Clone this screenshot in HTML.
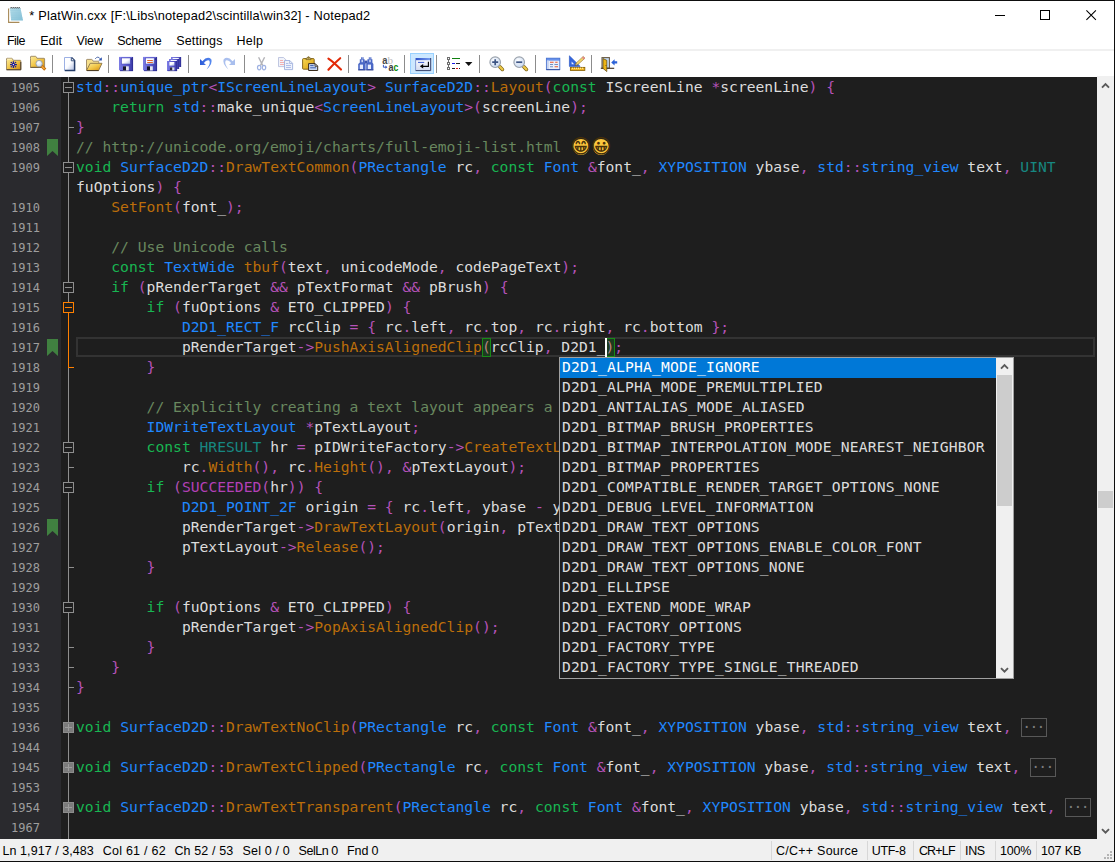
<!DOCTYPE html>
<html lang="en">
<head>
<meta charset="utf-8">
<title>* PlatWin.cxx [F:\Libs\notepad2\scintilla\win32] - Notepad2</title>
<style>
html,body{margin:0;padding:0;}
body{width:1115px;height:862px;overflow:hidden;background:#fff;position:relative;font-family:"Liberation Sans",sans-serif;}
#win{position:absolute;left:0;top:0;width:1115px;height:862px;overflow:hidden;background:#fff;}
.abs{position:absolute;}
/* title bar */
#bt{position:absolute;left:0;top:0;width:1115px;height:1px;background:#0e0e0e;}
#br{position:absolute;left:1114px;top:0;width:1px;height:862px;background:#0e0e0e;}
#bb{position:absolute;left:0;top:861px;width:1115px;height:1px;background:#0e0e0e;}
#title{position:absolute;left:29.3px;top:7px;height:18px;line-height:18px;font-size:12.8px;color:#000;white-space:pre;letter-spacing:0.175px;}
/* menu */
.mi{position:absolute;top:31px;height:19px;line-height:21px;font-size:12.5px;color:#000;white-space:pre;}
#menuline{position:absolute;left:0;top:49px;width:1114px;height:2px;background:#f0f0f0;}
/* toolbar */
.sep{position:absolute;top:55px;width:1px;height:18px;background:#8d8d8d;}
.ico{position:absolute;overflow:visible;}
/* editor */
#ed{position:absolute;left:0;top:77px;width:1097px;height:762px;background:#1e1e1e;overflow:hidden;}
#edtop{position:absolute;left:0;top:77px;width:1097px;height:1px;background:#111111;z-index:5;}
#lnm{position:absolute;left:0;top:0;width:61px;height:762px;background:#2a2a2e;}
.ln{position:absolute;left:0;width:40px;height:20px;line-height:22px;text-align:right;font-family:"DejaVu Sans Mono","Liberation Mono",monospace;font-size:12px;color:#9e9e9e;white-space:pre;}
.cl{position:absolute;left:76px;height:20px;line-height:20px;font-family:"DejaVu Sans Mono","Liberation Mono",monospace;font-size:14.667px;color:#dcdcdc;white-space:pre;}
.k{color:#18b652;}
.t{color:#2088ff;}
.f{color:#bc6e0a;}
.o{color:#b552b8;}
.c{color:#69885f;}
.bm{color:#b98484;}
.m{color:#b340b6;}
.z{color:#178781;}

.fb{width:24px;height:17px;border:1px solid #585858;line-height:15px;text-align:center;font-family:"DejaVu Sans Mono","Liberation Mono",monospace;font-size:14.667px;letter-spacing:-1.7px;text-indent:-1.7px;color:#7c7c7c;white-space:pre;}
.emo{width:16px;height:16px;border-radius:50%;background:#ffc83d;}
.emo span{position:absolute;left:-4px;top:-4.2px;width:24px;text-align:center;font-family:"DejaVu Sans",sans-serif;font-variant-emoji:text;font-size:20px;line-height:24px;color:#46300a;}
#pop{position:absolute;left:559px;top:280px;width:453px;height:320px;border:1px solid #a0a0a0;background:#1e1e1e;overflow:hidden;}
.pi{position:absolute;left:0;width:436px;height:20px;line-height:17.4px;letter-spacing:0.17px;padding-left:2px;box-sizing:border-box;font-family:"DejaVu Sans Mono","Liberation Mono",monospace;font-size:14.667px;color:#dcdcdc;white-space:pre;}
.pi.sel{background:#0078d7;color:#ffffff;}
/* status */
#sb{position:absolute;left:0;top:839px;width:1114px;height:22px;background:#f0f0f0;}
.st{position:absolute;top:0;height:22px;line-height:25.6px;font-size:12.5px;color:#000;white-space:pre;}
.ss{position:absolute;top:2px;width:1px;height:19px;background:#d7d7d7;}
</style>
</head>
<body>
<div id="win">
<svg class="abs" style="left:7px;top:6px" width="18" height="18" viewBox="0 0 18 18">
<defs><linearGradient id="gN" x1="0" y1="0" x2="1" y2="1"><stop offset="0" stop-color="#c2e4ee"/><stop offset="1" stop-color="#7fbdd6"/></linearGradient></defs>
<path d="M1.6 2.4V16.4H12.4" fill="none" stroke="#a88a58" stroke-width="1.1"/>
<path d="M2.9 1.9H13.4L16 14.6H4.1Z" fill="url(#gN)"/>
<path d="M3.3 4.2H13.9M3.5 6.1H14.3M3.7 8H14.7M3.8 9.9H15M4 11.8H15.4M4.1 13.6H15.8" stroke="#8ec6da" stroke-width="0.7"/>
<path d="M3.4 2.4L4.2 1.1L5 2.4M5.4 2.4L6.2 1.1L7 2.4M7.4 2.4L8.2 1.1L9 2.4M9.4 2.4L10.2 1.1L11 2.4M11.4 2.4L12.2 1.1L13 2.4" fill="none" stroke="#2c3438" stroke-width="0.7"/>
</svg>
<div id="title">* PlatWin.cxx [F:\Libs\notepad2\scintilla\win32] - Notepad2</div>
<svg class="abs" style="left:976px;top:0" width="138" height="31" viewBox="0 0 138 31" shape-rendering="crispEdges">
<rect x="19" y="15" width="10" height="1" fill="#000"/>
<rect x="64.5" y="10.5" width="9" height="9" fill="none" stroke="#000" stroke-width="1"/>
<path d="M110.4 10.4L119.9 19.9M119.9 10.4L110.4 19.9" stroke="#000" stroke-width="1.05" shape-rendering="geometricPrecision"/>
</svg>

<div class="mi" style="left:7.0px;letter-spacing:-0.60px">File</div>
<div class="mi" style="left:40.2px;letter-spacing:0.10px">Edit</div>
<div class="mi" style="left:76.4px;letter-spacing:-0.10px">View</div>
<div class="mi" style="left:117.2px;letter-spacing:-0.26px">Scheme</div>
<div class="mi" style="left:176.2px;letter-spacing:0.15px">Settings</div>
<div class="mi" style="left:236.4px;letter-spacing:0.30px">Help</div>
<div id="menuline"></div>

<div class="abs" style="left:410px;top:53px;width:22px;height:19px;border:1px solid #99d1ff;background:#cce8ff"></div>
<svg class="abs" style="left:0;top:50px" width="1114" height="27" viewBox="0 50 1114 27">
<defs>
<linearGradient id="gF" x1="0" y1="0" x2="1" y2="1"><stop offset="0" stop-color="#fcec9e"/><stop offset="0.5" stop-color="#f2c84a"/><stop offset="1" stop-color="#d48c0c"/></linearGradient>
<linearGradient id="gD" x1="0" y1="0" x2="1" y2="0"><stop offset="0" stop-color="#7c7ce4"/><stop offset="0.5" stop-color="#5c5cd0"/><stop offset="1" stop-color="#3a3aa6"/></linearGradient>
<linearGradient id="gP" x1="0" y1="0" x2="1" y2="1"><stop offset="0" stop-color="#ffffff"/><stop offset="0.5" stop-color="#fbfcff"/><stop offset="1" stop-color="#a9b8de"/></linearGradient>
<radialGradient id="gL" cx="0.4" cy="0.35" r="0.7"><stop offset="0" stop-color="#ffffff"/><stop offset="1" stop-color="#c4d6f0"/></radialGradient>
<linearGradient id="gW" x1="0" y1="0" x2="0" y2="1"><stop offset="0" stop-color="#ffffff"/><stop offset="1" stop-color="#d4dcf0"/></linearGradient>
<linearGradient id="gT" x1="0" y1="0" x2="1" y2="0"><stop offset="0" stop-color="#2c50c8"/><stop offset="1" stop-color="#7aa0f0"/></linearGradient>
<linearGradient id="gC" x1="0" y1="0" x2="1" y2="1"><stop offset="0" stop-color="#f8d850"/><stop offset="1" stop-color="#d89c10"/></linearGradient>
<linearGradient id="gU" x1="0" y1="0" x2="1" y2="0"><stop offset="0" stop-color="#2a5ad8"/><stop offset="1" stop-color="#5a8cf0"/></linearGradient>
</defs>
<!-- separators -->
<g fill="#8c8c8c"><rect x="52" y="55" width="1" height="18"/><rect x="108" y="55" width="1" height="18"/><rect x="188" y="55" width="1" height="18"/><rect x="244" y="55" width="1" height="18"/><rect x="348" y="55" width="1" height="18"/><rect x="404" y="55" width="1" height="18"/><rect x="436" y="55" width="1" height="18"/><rect x="479" y="55" width="1" height="18"/><rect x="535" y="55" width="1" height="18"/><rect x="591" y="55" width="1" height="18"/></g>
<!-- 1 favorites folder -->
<g>
<path d="M6.5 60.5V58.9Q6.5 58.3 7.1 58.3H11.6Q12.2 58.3 12.5 58.9L13.2 60.3H20.2Q20.8 60.3 20.8 60.9V69.6H6.5Z" fill="url(#gF)" stroke="#9a8460" stroke-width="0.9"/>
<path d="M6.5 69.8H20.9M20.8 62V69.8" stroke="#4a3820" stroke-width="1" fill="none"/>
<path d="M7.2 59.2H11.8" stroke="#fdf4c8" stroke-width="1"/>
<g stroke="#18189a" stroke-width="1.3" fill="none"><path d="M13.4 61.2V68M10 64.6H16.9"/></g>
<g fill="#1c1c9c"><circle cx="11.3" cy="62.5" r="0.8"/><circle cx="15.5" cy="62.5" r="0.8"/><circle cx="11.3" cy="66.7" r="0.8"/><circle cx="15.5" cy="66.7" r="0.8"/><circle cx="13.4" cy="64.6" r="1.8"/></g>
<circle cx="13.4" cy="64.6" r="0.7" fill="#fff"/>
</g>
<!-- 2 find folder -->
<g>
<path d="M30.5 58.5V56.9Q30.5 56.3 31.1 56.3H35.4Q36 56.3 36.3 56.9L37 58.3H44Q44.6 58.3 44.6 58.9V67.4H30.5Z" fill="url(#gF)" stroke="#9a8460" stroke-width="0.9"/>
<path d="M30.5 67.4H44.6" stroke="#6a5838" stroke-width="0.9"/>
<path d="M42.4 66.8L44.2 68.6" stroke="#c47012" stroke-width="3" stroke-linecap="square"/>
<path d="M42.6 67L44 68.4" stroke="#f4a838" stroke-width="1.4" stroke-linecap="square"/>
<circle cx="39.1" cy="63.6" r="3.2" fill="url(#gL)" stroke="#98a0a8" stroke-width="0.9"/>
</g>
<!-- 3 new -->
<g>
<path d="M64.5 57.5H71.5L74.6 60.6V70.5H64.5Z" fill="url(#gP)"/>
<path d="M64.5 70.5V57.5H71.5" fill="none" stroke="#9cb0e4" stroke-width="1"/>
<path d="M71.5 57.5L74.6 60.6V70.5H64.8" fill="none" stroke="#243c68" stroke-width="1.5"/>
<path d="M71.3 57.7V60.8H74.4" fill="#e8eefc" stroke="#2c4672" stroke-width="0.9"/>
</g>
<!-- 4 open -->
<g>
<path d="M86.5 70.3V60Q86.5 59.4 87.1 59.4H91.6Q92.2 59.4 92.5 60L93.1 61.2H98.2Q98.8 61.2 98.8 61.8V63.3" fill="#f7e08c" stroke="#9a8460" stroke-width="0.9"/>
<path d="M86.5 70.5L90.2 63.3H102L98.6 70.5Z" fill="url(#gF)" stroke="#8a7448" stroke-width="0.9"/>
<path d="M87 70.6H98.6" stroke="#4a3a20" stroke-width="1"/>
<path d="M95.2 58.9Q97.8 55.2 100.6 59.2" fill="none" stroke="#4a66a8" stroke-width="0.95"/>
<path d="M98.4 60.4H101.8V57.2Z" fill="#2c52b0"/>
</g>
<!-- 5 save -->
<g id="flop">
<path d="M119 57H133V71H120.2L119 69.8Z" fill="url(#gD)"/>
<path d="M119.3 57.3H132.7" stroke="#8c8cf0" stroke-width="0.6"/>
<path d="M132.6 57V71M120 70.7H133" stroke="#2c2c90" stroke-width="0.8"/>
<rect x="121.7" y="58" width="8.5" height="6" fill="url(#gP)" stroke="#4848b8" stroke-width="0.5"/>
<rect x="123" y="66.3" width="5.8" height="4.2" fill="#e4e6ee"/>
<rect x="123" y="66.3" width="3" height="4.2" fill="#14142c"/>
<rect x="131.2" y="58.4" width="0.9" height="1.6" fill="#2c2c80"/>
</g>
<!-- 6 save as -->
<use href="#flop" x="24"/>
<path d="M147.2 60.5H152.8M147.2 62.5H152.8" stroke="#e0642c" stroke-width="1"/>
<!-- 7 save copies -->
<g id="sflop">
<rect x="171" y="57" width="10" height="10" fill="url(#gD)"/>
<path d="M180.7 57V67" stroke="#2c2c90" stroke-width="0.7"/>
<rect x="172.6" y="57.9" width="6.2" height="1.6" fill="#f4f6ff"/>
</g>
<use href="#sflop" x="-2" y="2"/>
<g>
<rect x="167" y="61" width="10" height="10" fill="url(#gD)"/>
<path d="M176.7 61V71M167.6 70.7H177" stroke="#2c2c90" stroke-width="0.7"/>
<rect x="169.4" y="62" width="5" height="3.6" fill="url(#gP)"/>
<rect x="170" y="67.4" width="4.4" height="3" fill="#dcdfe8"/>
<rect x="170" y="67.4" width="2.2" height="3" fill="#2a2a3c"/>
</g>
<!-- 8 undo -->
<path d="M200 58.9V64.9H206L203.9 62.9Q206.2 59.6 209.2 60.4Q211.2 62.6 206.6 69.6Q213.2 63.2 211.3 59.3Q207.4 55.6 202.4 61.2Z" fill="url(#gU)"/>
<!-- 9 redo -->
<path d="M235 58.9V64.9H229L231.1 62.9Q228.8 59.6 225.8 60.4Q223.8 62.6 228.4 69.6Q221.8 63.2 223.7 59.3Q227.6 55.6 232.6 61.2Z" fill="#a9bfee"/>
<!-- 10 cut -->
<g fill="none">
<path d="M258.6 57.2L262.8 65.6M264.6 57.2L260.4 65.6" stroke="#b4b4b8" stroke-width="1.4"/>
<ellipse cx="259.2" cy="67.6" rx="1.7" ry="2.2" stroke="#9fb2e2" stroke-width="1.2"/>
<ellipse cx="264" cy="67.6" rx="1.7" ry="2.2" stroke="#9fb2e2" stroke-width="1.2"/>
</g>
<!-- 11 copy -->
<g>
<path d="M278.5 57.5H283.6L286.2 60.1V66.6H278.5Z" fill="#f1f3fa" stroke="#b9c1de" stroke-width="0.9"/>
<path d="M280 60.5H283M280 62.5H284.6M280 64.5H284.6" stroke="#f3a8a8" stroke-width="0.9"/>
<path d="M284.5 60.5H289.8L292.6 63.3V69.6H284.5Z" fill="#eef2fb" stroke="#9fb0dc" stroke-width="0.9"/>
<path d="M289.6 60.7V63.5H292.4" fill="none" stroke="#9fb0dc" stroke-width="0.8"/>
<path d="M286 63.5H288.4M286 65.5H291M286 67.5H291" stroke="#a8b8e8" stroke-width="0.9"/>
</g>
<!-- 12 paste -->
<g>
<rect x="302.6" y="58.6" width="11.6" height="10.6" rx="0.8" fill="url(#gC)" stroke="#7a5a10" stroke-width="0.9"/>
<path d="M306 59.6V58.2H307.4Q307.4 56.6 308.5 56.6Q309.6 56.6 309.6 58.2H311V59.6Z" fill="#f0d878" stroke="#6a5420" stroke-width="0.7"/>
<circle cx="308.5" cy="57.9" r="0.6" fill="#5a4a20"/>
<path d="M308.6 63.6H315.2L317.7 66.1V70.5H308.6Z" fill="#c6d6f2" stroke="#3a2c1c" stroke-width="1"/>
<path d="M315 63.8V66.3H317.5" fill="none" stroke="#3a2c1c" stroke-width="0.8"/>
<path d="M310.2 65.6H313.6M310.2 67.8H316" stroke="#3c5cac" stroke-width="1"/>
</g>
<!-- 13 delete -->
<g stroke="#e22a08" stroke-width="2.1" stroke-linecap="round" fill="none">
<path d="M328.4 58.6Q334 62.4 341 69.6"/>
<path d="M340.2 58.2Q333.6 63.8 328.4 69.8"/>
</g>
<!-- 14 find -->
<g>
<path d="M361 57.2H363.6V59.2H364.6V62.6L365.6 64V70H358.2V64L359.8 62.6V59.2H361Z" fill="#4a68c6"/>
<path d="M368.8 57.2H371.4V59.2H372.4V62.6L373.4 64V70H366.2V64L367.4 62.6V59.2H368.8Z" fill="#4a68c6"/>
<rect x="364.4" y="60.6" width="3" height="3" fill="#3a54b0"/>
<rect x="359.8" y="64.6" width="3.2" height="4.4" fill="#e6ecfc"/>
<rect x="367.8" y="64.6" width="3.2" height="4.4" fill="#e6ecfc"/>
<rect x="361.4" y="59.6" width="1.6" height="2.6" fill="#c4d0f2"/>
<rect x="369.2" y="59.6" width="1.6" height="2.6" fill="#c4d0f2"/>
<path d="M361.6 58H363M369.4 58H370.8" stroke="#dfe6fa" stroke-width="0.8"/>
<path d="M358.2 70H365.6M366.2 70H373.4" stroke="#283a88" stroke-width="0.9"/>
</g>
<!-- 15 replace -->
<g font-family="Liberation Sans, sans-serif" font-weight="bold" font-size="10.2">
<text x="382.2" y="63.7" fill="#484848" textLength="5.2" lengthAdjust="spacingAndGlyphs">a</text>
<text x="387.4" y="63.7" fill="#bcbcbc" font-family="Liberation Serif, serif" font-weight="normal" font-size="11">b</text>
<text x="388.4" y="70.8" fill="#3a3a3a" textLength="5" lengthAdjust="spacingAndGlyphs">a</text>
<text x="393.4" y="70.8" fill="#0a8a0a" textLength="4.8" lengthAdjust="spacingAndGlyphs">c</text>
</g>
<path d="M383.4 64.8V67.2H386.4" fill="none" stroke="#3a5ac0" stroke-width="1"/>
<path d="M385.4 65.6L387.4 67.2L385.4 68.8Z" fill="#3a5ac0"/>
<!-- 16 wrap -->
<g>
<rect x="415.5" y="58.2" width="15.2" height="12" fill="url(#gW)"/>
<rect x="415.5" y="58" width="15.4" height="2.2" fill="url(#gT)"/>
<path d="M415.6 60V70.3" stroke="#7088c8" stroke-width="0.8"/>
<path d="M430.7 58V70.6H415.6" fill="none" stroke="#36406c" stroke-width="1"/>
<path d="M418 62.4H424.2" stroke="#3c5cd0" stroke-width="1"/>
<path d="M428.4 61.8V66.3H422" fill="none" stroke="#000" stroke-width="1.15"/>
<path d="M419.8 66.3L423.2 64V68.6Z" fill="#000"/>
</g>
<!-- 17 fold tree -->
<g shape-rendering="crispEdges">
<path d="M448.5 60V62M448.5 65V67" stroke="#707070" stroke-width="1"/>
<g fill="#fff" stroke="#6e6e6e" stroke-width="1"><rect x="447.5" y="57.5" width="2" height="2"/><rect x="447.5" y="62.5" width="2" height="2"/><rect x="447.5" y="67.5" width="2" height="2"/></g>
<rect x="452" y="58" width="8" height="1" fill="#108010"/>
<rect x="452" y="63" width="3" height="1" fill="#1818e8"/><rect x="456" y="63" width="4" height="1" fill="#202020"/>
<rect x="452" y="68" width="3" height="1" fill="#202020"/><rect x="456" y="68" width="2" height="1" fill="#e81818"/><rect x="459" y="68" width="1" height="1" fill="#202020"/>
</g>
<path d="M465 62H472.4L468.7 66Z" fill="#111"/>
<!-- 18 zoom in -->
<g id="zm">
<path d="M499.8 66.8L502.4 69.4" stroke="#7a6018" stroke-width="3.6" stroke-linecap="round"/>
<path d="M499.8 66.8L502.4 69.4" stroke="#ecc848" stroke-width="2.2" stroke-linecap="round"/>
<circle cx="495.2" cy="62.2" r="5.3" fill="url(#gL)" stroke="#9aa2ac" stroke-width="1.1"/>
</g>
<path d="M492.2 62.2H498.2M495.2 59.2V65.2" stroke="#3c5484" stroke-width="1.7"/>
<!-- 19 zoom out -->
<use href="#zm" x="24"/>
<path d="M516.2 62.2H522.2" stroke="#3c5484" stroke-width="1.7"/>
<!-- 20 scheme -->
<g>
<rect x="546.4" y="58.2" width="13.4" height="11.4" fill="#eaf0fc"/>
<rect x="546.4" y="58" width="13.4" height="2.6" fill="#5c88e8"/>
<path d="M546.4 58.8H559.8" stroke="#8cb0f8" stroke-width="0.8"/>
<rect x="547" y="60.6" width="1.8" height="9" fill="#c8d4f0"/>
<rect x="546.4" y="58.2" width="13.4" height="11.4" fill="none" stroke="#4a74d0" stroke-width="0.9"/>
<path d="M546.4 69.7H559.9" stroke="#2c4a98" stroke-width="0.9"/>
<path d="M550 62.3H553.6M555.2 62.3H557.6M554.6 66.7H558" stroke="#f0582c" stroke-width="1.1"/>
<path d="M550 64.5H553M554.4 64.5H558M550 66.7H553" stroke="#7890c0" stroke-width="1.1"/>
</g>
<!-- 21 customize -->
<g>
<path d="M569.4 55.8V66.4H580.2Z" fill="#3466dc" stroke="#2450c0" stroke-width="0.6"/>
<path d="M571.6 61.6V64.2H574.2Z" fill="#e8f0ff"/>
<path d="M583.2 56.4L585 58.2L577.4 65L575.2 65.6L575.8 63.4Z" fill="#f2d468" stroke="#8a7030" stroke-width="0.6"/>
<path d="M583.2 56.4L585 58.2L583.6 59.4L581.8 57.6Z" fill="#e88888"/>
<path d="M575.2 65.6L575.8 63.4L577.4 65Z" fill="#fff" stroke="#333" stroke-width="0.5"/>
<rect x="570.4" y="67.4" width="14.4" height="3" fill="#f4b824" stroke="#8c6408" stroke-width="0.9"/>
<path d="M572.5 67.6V69M574.5 67.6V69M576.5 67.6V69M578.5 67.6V69M580.5 67.6V69M582.5 67.6V69" stroke="#fff0b0" stroke-width="0.8"/>
</g>
<!-- 22 exit -->
<g>
<rect x="602" y="57.6" width="7.4" height="10.6" fill="#c4daf4" stroke="#6a5c48" stroke-width="1.1"/>
<path d="M600.8 68.3H614.2" stroke="#4a3c2c" stroke-width="1.2"/>
<path d="M603 58.6L606.8 60.3V71.6L603 68.4Z" fill="#ecb414" stroke="#5a4410" stroke-width="0.7"/>
<circle cx="606" cy="65.4" r="0.5" fill="#5a4410"/>
<path d="M611.2 62.4L614.6 59.2V61.2H617.2V63.6H614.6V65.6Z" fill="#2c62d8"/>
</g>
</svg>


<div id="ed">
<div id="lnm"></div>
<div class="abs" style="left:76px;top:260px;width:1015px;height:16px;border:2px solid #333333;"></div>
<div class="ln" style="top:0px">1905</div>
<div class="ln" style="top:20px">1906</div>
<div class="ln" style="top:40px">1907</div>
<div class="ln" style="top:60px">1908</div>
<div class="ln" style="top:80px">1909</div>
<div class="ln" style="top:120px">1910</div>
<div class="ln" style="top:140px">1911</div>
<div class="ln" style="top:160px">1912</div>
<div class="ln" style="top:180px">1913</div>
<div class="ln" style="top:200px">1914</div>
<div class="ln" style="top:220px">1915</div>
<div class="ln" style="top:240px">1916</div>
<div class="ln" style="top:260px">1917</div>
<div class="ln" style="top:280px">1918</div>
<div class="ln" style="top:300px">1919</div>
<div class="ln" style="top:320px">1920</div>
<div class="ln" style="top:340px">1921</div>
<div class="ln" style="top:360px">1922</div>
<div class="ln" style="top:380px">1923</div>
<div class="ln" style="top:400px">1924</div>
<div class="ln" style="top:420px">1925</div>
<div class="ln" style="top:440px">1926</div>
<div class="ln" style="top:460px">1927</div>
<div class="ln" style="top:480px">1928</div>
<div class="ln" style="top:500px">1929</div>
<div class="ln" style="top:520px">1930</div>
<div class="ln" style="top:540px">1931</div>
<div class="ln" style="top:560px">1932</div>
<div class="ln" style="top:580px">1933</div>
<div class="ln" style="top:600px">1934</div>
<div class="ln" style="top:620px">1935</div>
<div class="ln" style="top:640px">1936</div>
<div class="ln" style="top:660px">1944</div>
<div class="ln" style="top:680px">1945</div>
<div class="ln" style="top:700px">1953</div>
<div class="ln" style="top:720px">1954</div>
<div class="ln" style="top:740px">1967</div>
<svg class="abs" style="left:47px;top:62px" width="11" height="17" viewBox="0 0 11 17"><path d="M0 0H11V17L5.5 12L0 17Z" fill="#408040"/></svg>
<svg class="abs" style="left:47px;top:262px" width="11" height="17" viewBox="0 0 11 17"><path d="M0 0H11V17L5.5 12L0 17Z" fill="#408040"/></svg>
<svg class="abs" style="left:47px;top:442px" width="11" height="17" viewBox="0 0 11 17"><path d="M0 0H11V17L5.5 12L0 17Z" fill="#408040"/></svg>
<svg class="abs" style="left:61px;top:0" width="15" height="762" viewBox="61 0 15 762" shape-rendering="crispEdges">
<rect x="68" y="0" width="1" height="762" fill="#8e8e8e"/>
<rect x="68" y="236" width="1" height="55" fill="#ff8000"/>
<rect x="63.5" y="5.5" width="10" height="10" fill="#1e1e1e" stroke="#8e8e8e" stroke-width="1"/>
<rect x="65" y="10" width="7" height="1" fill="#8e8e8e"/>
<rect x="63.5" y="85.5" width="10" height="10" fill="#1e1e1e" stroke="#8e8e8e" stroke-width="1"/>
<rect x="65" y="90" width="7" height="1" fill="#8e8e8e"/>
<rect x="63.5" y="205.5" width="10" height="10" fill="#1e1e1e" stroke="#8e8e8e" stroke-width="1"/>
<rect x="65" y="210" width="7" height="1" fill="#8e8e8e"/>
<rect x="63.5" y="365.5" width="10" height="10" fill="#1e1e1e" stroke="#8e8e8e" stroke-width="1"/>
<rect x="65" y="370" width="7" height="1" fill="#8e8e8e"/>
<rect x="63.5" y="405.5" width="10" height="10" fill="#1e1e1e" stroke="#8e8e8e" stroke-width="1"/>
<rect x="65" y="410" width="7" height="1" fill="#8e8e8e"/>
<rect x="63.5" y="525.5" width="10" height="10" fill="#1e1e1e" stroke="#8e8e8e" stroke-width="1"/>
<rect x="65" y="530" width="7" height="1" fill="#8e8e8e"/>
<rect x="63.5" y="225.5" width="10" height="10" fill="#1e1e1e" stroke="#ff8000" stroke-width="1"/>
<rect x="65" y="230" width="7" height="1" fill="#ff8000"/>
<rect x="68" y="50" width="6" height="1" fill="#8e8e8e"/>
<rect x="68" y="390" width="6" height="1" fill="#8e8e8e"/>
<rect x="68" y="490" width="6" height="1" fill="#8e8e8e"/>
<rect x="68" y="570" width="6" height="1" fill="#8e8e8e"/>
<rect x="68" y="590" width="6" height="1" fill="#8e8e8e"/>
<rect x="68" y="610" width="6" height="1" fill="#8e8e8e"/>
<rect x="68" y="290" width="6" height="1" fill="#ff8000"/>
<rect x="63.5" y="645.5" width="10" height="10" fill="#7b7b7b" stroke="#8c8c8c" stroke-width="1"/>
<rect x="65" y="650" width="7" height="1" fill="#9c9c9c"/>
<rect x="68" y="647" width="1" height="7" fill="#9c9c9c"/>
<rect x="63.5" y="685.5" width="10" height="10" fill="#7b7b7b" stroke="#8c8c8c" stroke-width="1"/>
<rect x="65" y="690" width="7" height="1" fill="#9c9c9c"/>
<rect x="68" y="687" width="1" height="7" fill="#9c9c9c"/>
<rect x="63.5" y="725.5" width="10" height="10" fill="#7b7b7b" stroke="#8c8c8c" stroke-width="1"/>
<rect x="65" y="730" width="7" height="1" fill="#9c9c9c"/>
<rect x="68" y="727" width="1" height="7" fill="#9c9c9c"/>
</svg>
<div class="abs" style="left:481.9px;top:261px;width:7.4px;height:17px;border:1px solid #178a17;background:#1d3a1f;box-sizing:content-box"></div>
<div class="abs" style="left:605.5px;top:261px;width:7.4px;height:17px;border:1px solid #178a17;background:#1d3a1f;box-sizing:content-box"></div>
<div class="cl" style="top:0px"><span class="t">std</span><span class="o">::</span><span class="t">unique_ptr</span><span class="o">&lt;</span><span class="t">IScreenLineLayout</span><span class="o">&gt;</span> <span class="t">SurfaceD2D</span><span class="o">::</span><span class="f">Layout</span><span class="o">(</span><span class="k">const</span> IScreenLine <span class="o">*</span>screenLine<span class="o">)</span> <span class="o">{</span></div>
<div class="cl" style="top:20px">    <span class="k">return</span> <span class="t">std</span><span class="o">::</span>make_unique<span class="o">&lt;</span><span class="t">ScreenLineLayout</span><span class="o">&gt;(</span>screenLine<span class="o">);</span></div>
<div class="cl" style="top:40px"><span class="o">}</span></div>
<div class="cl" style="top:60px"><span class="c">// http://unicode.org/emoji/charts/full-emoji-list.html </span></div>
<div class="cl" style="top:80px"><span class="k">void</span> <span class="t">SurfaceD2D</span><span class="o">::</span><span class="f">DrawTextCommon</span><span class="o">(</span><span class="t">PRectangle</span> rc<span class="o">,</span> <span class="k">const</span> <span class="t">Font</span> <span class="o">&amp;</span>font_<span class="o">,</span> <span class="t">XYPOSITION</span> ybase<span class="o">,</span> <span class="t">std</span><span class="o">::</span><span class="t">string_view</span> text<span class="o">,</span> <span class="z">UINT</span> </div>
<div class="cl" style="top:100px">fuOptions<span class="o">)</span> <span class="o">{</span></div>
<div class="cl" style="top:120px">    <span class="f">SetFont</span><span class="o">(</span>font_<span class="o">);</span></div>
<div class="cl" style="top:160px">    <span class="c">// Use Unicode calls</span></div>
<div class="cl" style="top:180px">    <span class="k">const</span> <span class="t">TextWide</span> <span class="f">tbuf</span><span class="o">(</span>text<span class="o">,</span> unicodeMode<span class="o">,</span> codePageText<span class="o">);</span></div>
<div class="cl" style="top:200px">    <span class="k">if</span> <span class="o">(</span>pRenderTarget <span class="o">&amp;&amp;</span> pTextFormat <span class="o">&amp;&amp;</span> pBrush<span class="o">)</span> <span class="o">{</span></div>
<div class="cl" style="top:220px">        <span class="k">if</span> <span class="o">(</span>fuOptions <span class="o">&amp;</span> ETO_CLIPPED<span class="o">)</span> <span class="o">{</span></div>
<div class="cl" style="top:240px">            <span class="t">D2D1_RECT_F</span> rcClip <span class="o">=</span> <span class="o">{</span> rc<span class="o">.</span>left<span class="o">,</span> rc<span class="o">.</span>top<span class="o">,</span> rc<span class="o">.</span>right<span class="o">,</span> rc<span class="o">.</span>bottom <span class="o">};</span></div>
<div class="cl" style="top:260px">            pRenderTarget<span class="o">-&gt;</span><span class="f">PushAxisAlignedClip</span><span class="bm">(</span>rcClip<span class="o">,</span> D2D1_<span class="bm">)</span><span class="o">;</span></div>
<div class="cl" style="top:280px">        <span class="o">}</span></div>
<div class="cl" style="top:320px">        <span class="c">// Explicitly creating a text layout appears a little faster</span></div>
<div class="cl" style="top:340px">        <span class="t">IDWriteTextLayout</span> <span class="o">*</span>pTextLayout<span class="o">;</span></div>
<div class="cl" style="top:360px">        <span class="k">const</span> <span class="z">HRESULT</span> hr <span class="o">=</span> pIDWriteFactory<span class="o">-&gt;</span><span class="f">CreateTextLayout</span><span class="o">(</span>tbuf<span class="o">.</span>buffer<span class="o">,</span> tbuf<span class="o">.</span>tlen<span class="o">,</span> pTextFormat<span class="o">,</span></div>
<div class="cl" style="top:380px">            rc<span class="o">.</span><span class="f">Width</span><span class="o">(),</span> rc<span class="o">.</span><span class="f">Height</span><span class="o">(),</span> <span class="o">&amp;</span>pTextLayout<span class="o">);</span></div>
<div class="cl" style="top:400px">        <span class="k">if</span> <span class="o">(</span><span class="m">SUCCEEDED</span><span class="o">(</span>hr<span class="o">))</span> <span class="o">{</span></div>
<div class="cl" style="top:420px">            <span class="t">D2D1_POINT_2F</span> origin <span class="o">=</span> <span class="o">{</span> rc<span class="o">.</span>left<span class="o">,</span> ybase <span class="o">-</span> yAscent <span class="o">};</span></div>
<div class="cl" style="top:440px">            pRenderTarget<span class="o">-&gt;</span><span class="f">DrawTextLayout</span><span class="o">(</span>origin<span class="o">,</span> pTextLayout<span class="o">,</span> pBrush<span class="o">,</span> d2dDrawTextOptions<span class="o">);</span></div>
<div class="cl" style="top:460px">            pTextLayout<span class="o">-&gt;</span><span class="f">Release</span><span class="o">();</span></div>
<div class="cl" style="top:480px">        <span class="o">}</span></div>
<div class="cl" style="top:520px">        <span class="k">if</span> <span class="o">(</span>fuOptions <span class="o">&amp;</span> ETO_CLIPPED<span class="o">)</span> <span class="o">{</span></div>
<div class="cl" style="top:540px">            pRenderTarget<span class="o">-&gt;</span><span class="f">PopAxisAlignedClip</span><span class="o">();</span></div>
<div class="cl" style="top:560px">        <span class="o">}</span></div>
<div class="cl" style="top:580px">    <span class="o">}</span></div>
<div class="cl" style="top:600px"><span class="o">}</span></div>
<div class="cl" style="top:640px"><span class="k">void</span> <span class="t">SurfaceD2D</span><span class="o">::</span><span class="f">DrawTextNoClip</span><span class="o">(</span><span class="t">PRectangle</span> rc<span class="o">,</span> <span class="k">const</span> <span class="t">Font</span> <span class="o">&amp;</span>font_<span class="o">,</span> <span class="t">XYPOSITION</span> ybase<span class="o">,</span> <span class="t">std</span><span class="o">::</span><span class="t">string_view</span> text<span class="o">,</span> </div>
<div class="cl" style="top:680px"><span class="k">void</span> <span class="t">SurfaceD2D</span><span class="o">::</span><span class="f">DrawTextClipped</span><span class="o">(</span><span class="t">PRectangle</span> rc<span class="o">,</span> <span class="k">const</span> <span class="t">Font</span> <span class="o">&amp;</span>font_<span class="o">,</span> <span class="t">XYPOSITION</span> ybase<span class="o">,</span> <span class="t">std</span><span class="o">::</span><span class="t">string_view</span> text<span class="o">,</span> </div>
<div class="cl" style="top:720px"><span class="k">void</span> <span class="t">SurfaceD2D</span><span class="o">::</span><span class="f">DrawTextTransparent</span><span class="o">(</span><span class="t">PRectangle</span> rc<span class="o">,</span> <span class="k">const</span> <span class="t">Font</span> <span class="o">&amp;</span>font_<span class="o">,</span> <span class="t">XYPOSITION</span> ybase<span class="o">,</span> <span class="t">std</span><span class="o">::</span><span class="t">string_view</span> text<span class="o">,</span> </div>
<div class="abs fb" style="left:1020.8px;top:641px">···</div>
<div class="abs fb" style="left:1029.7px;top:681px">···</div>
<div class="abs fb" style="left:1065.0px;top:721px">···</div>
<div class="abs" style="left:604.8px;top:261px;width:2px;height:19px;background:#ffffff"></div>
<div class="abs emo" style="left:572.7px;top:61.6px"><span>&#x1F601;</span></div>
<div class="abs emo" style="left:593.2px;top:61.6px"><span>&#x1F600;</span></div>
<div id="pop">
<div class="pi sel" style="top:0px">D2D1_ALPHA_MODE_IGNORE</div>
<div class="pi" style="top:20px">D2D1_ALPHA_MODE_PREMULTIPLIED</div>
<div class="pi" style="top:40px">D2D1_ANTIALIAS_MODE_ALIASED</div>
<div class="pi" style="top:60px">D2D1_BITMAP_BRUSH_PROPERTIES</div>
<div class="pi" style="top:80px">D2D1_BITMAP_INTERPOLATION_MODE_NEAREST_NEIGHBOR</div>
<div class="pi" style="top:100px">D2D1_BITMAP_PROPERTIES</div>
<div class="pi" style="top:120px">D2D1_COMPATIBLE_RENDER_TARGET_OPTIONS_NONE</div>
<div class="pi" style="top:140px">D2D1_DEBUG_LEVEL_INFORMATION</div>
<div class="pi" style="top:160px">D2D1_DRAW_TEXT_OPTIONS</div>
<div class="pi" style="top:180px">D2D1_DRAW_TEXT_OPTIONS_ENABLE_COLOR_FONT</div>
<div class="pi" style="top:200px">D2D1_DRAW_TEXT_OPTIONS_NONE</div>
<div class="pi" style="top:220px">D2D1_ELLIPSE</div>
<div class="pi" style="top:240px">D2D1_EXTEND_MODE_WRAP</div>
<div class="pi" style="top:260px">D2D1_FACTORY_OPTIONS</div>
<div class="pi" style="top:280px">D2D1_FACTORY_TYPE</div>
<div class="pi" style="top:300px">D2D1_FACTORY_TYPE_SINGLE_THREADED</div>
<div class="abs" style="left:436px;top:0;width:17px;height:320px;background:#f0f0f0"></div>
<div class="abs" style="left:437px;top:17px;width:15px;height:131px;background:#cdcdcd"></div>
<svg class="abs" style="left:436px;top:0" width="17" height="17" viewBox="0 0 17 17"><path d="M5 10.7L8.5 7.2L12 10.7" fill="none" stroke="#5a5a5a" stroke-width="1.9"/></svg>
<svg class="abs" style="left:436px;top:303px" width="17" height="17" viewBox="0 0 17 17"><path d="M5 7.1L8.5 10.6L12 7.1" fill="none" stroke="#5a5a5a" stroke-width="1.9"/></svg>
</div>
</div>
<div class="abs" style="left:1097px;top:76px;width:17px;height:763px;background:#f0f0f0"></div>
<div class="abs" style="left:1098px;top:491px;width:15px;height:17px;background:#cdcdcd"></div>
<svg class="abs" style="left:1097px;top:77px" width="17" height="17" viewBox="0 0 17 17"><path d="M5 10.7L8.5 7.2L12 10.7" fill="none" stroke="#5a5a5a" stroke-width="1.9"/></svg>
<svg class="abs" style="left:1097px;top:822px" width="17" height="17" viewBox="0 0 17 17"><path d="M5 7.1L8.5 10.6L12 7.1" fill="none" stroke="#5a5a5a" stroke-width="1.9"/></svg>

<div id="sb">
<div class="st" style="left:2.6px;letter-spacing:0.05px">Ln 1,917 / 3,483</div>
<div class="st" style="left:102.7px;letter-spacing:0.25px">Col 61 / 62</div>
<div class="st" style="left:174.4px;letter-spacing:0.12px">Ch 52 / 53</div>
<div class="st" style="left:242.6px;letter-spacing:0.17px">Sel 0 / 0</div>
<div class="st" style="left:298.5px;letter-spacing:-0.43px">SelLn 0</div>
<div class="st" style="left:347.0px;letter-spacing:-0.10px">Fnd 0</div>
<div class="ss" style="left:771px"></div>
<div class="st" style="left:775.9px;letter-spacing:0.26px">C/C++ Source</div>
<div class="ss" style="left:867px"></div>
<div class="st" style="left:871.7px;letter-spacing:-0.30px">UTF-8</div>
<div class="ss" style="left:913px"></div>
<div class="st" style="left:918.9px;letter-spacing:-0.80px">CR+LF</div>
<div class="ss" style="left:960px"></div>
<div class="st" style="left:965.1px;letter-spacing:-0.40px">INS</div>
<div class="ss" style="left:995px"></div>
<div class="st" style="left:1000.1px;letter-spacing:-0.20px">100%</div>
<div class="ss" style="left:1036px"></div>
<div class="st" style="left:1041.0px;letter-spacing:-0.14px">107 KB</div>
<svg class="abs" style="left:1102px;top:10px" width="12" height="12" viewBox="1102 10 12 12" shape-rendering="crispEdges">
<g fill="#b4b4b4"><rect x="1110" y="12" width="2" height="2"/><rect x="1107" y="15" width="2" height="2"/><rect x="1110" y="15" width="2" height="2"/><rect x="1104" y="18" width="2" height="2"/><rect x="1107" y="18" width="2" height="2"/><rect x="1110" y="18" width="2" height="2"/></g>
</svg>
</div>

<div id="bt"></div><div id="br"></div><div id="bb"></div>
</div>
</body>
</html>
